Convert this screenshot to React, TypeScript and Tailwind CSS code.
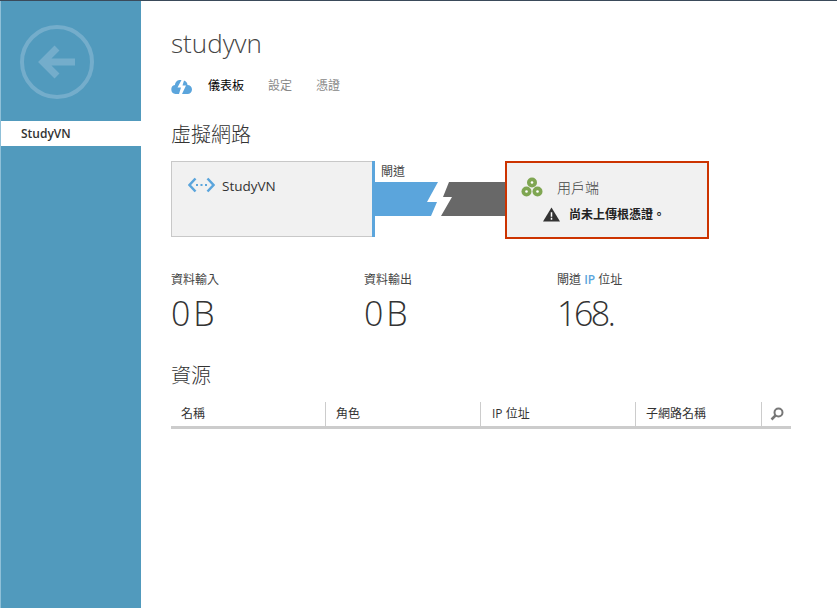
import React from 'react';

const font = "font-['Open_Sans','Noto_Sans_CJK_TC',sans-serif]";

const Stat = ({ label, value, className }: { label: React.ReactNode; value: string; className: string }) => (
  <div className={className}>
    <div className="text-[12px] leading-[16px] text-[#444]">{label}</div>
    <div className="mt-[3px] text-[34px] leading-[44px] font-light tracking-[-2.500px] [word-spacing:-1px] text-[#333]">{value}</div>
  </div>
);

const HeaderCell = ({ children, className }: { children: React.ReactNode; className: string }) => (
  <div className={`h-[24px] border-r border-[#ccc] text-[12px] leading-[23px] text-[#333] ${className}`}>{children}</div>
);

export default function App() {
  return (
    <div className={`flex h-[608px] w-[837px] flex-col overflow-hidden bg-white ${font}`}>
      <div className="h-px bg-[#3a4a5a]" />
      <div className="flex min-h-0 flex-1">
        {/* Sidebar */}
        <aside className="w-[141px] shrink-0 border-l border-[#8fc0d8] bg-[#519ABD]">
          <div className="flex h-[120px] items-start pt-[24px] pl-[19px]">
            <svg width="74" height="74" viewBox="0 0 74 74" fill="none">
              <circle cx="37" cy="37" r="35" stroke="#74ADCB" strokeWidth="4" />
              <path d="M55 37H24M37 23 L23 37 L37 51" stroke="#74ADCB" strokeWidth="7" />
            </svg>
          </div>
          <div className="h-[25px] bg-white pl-[20px] text-[12px] leading-[25px] font-semibold text-[#333]">StudyVN</div>
        </aside>

        {/* Main */}
        <main className="flex-1 pl-[30px]">
          <h1 className="mt-[24px] text-[26px] leading-[36px] font-light text-[#444]">studyvn</h1>

          <nav className="mt-[15px] flex h-[20px] items-center text-[12px] text-[#888]">
            <svg width="21" height="15" viewBox="0 0 21 15" className="mr-[16px]">
              <path d="M4.500 15a4.500 4.500 0 0 1-.6-8.900A5.500 5.500 0 0 1 8.500 1h2L6.500 8.500H10L8 15ZM11 15l4-8.500h-3.500L13 1.500A5 5 0 0 1 16.500 6a4.500 4.500 0 0 1 0 9Z" fill="#5BA5DC" />
            </svg>
            <span className="text-black">儀表板</span>
            <span className="ml-[24px]">設定</span>
            <span className="ml-[24px]">憑證</span>
          </nav>

          <h2 className="mt-[25px] text-[20px] leading-[28px] font-light text-[#333]">虛擬網路</h2>

          {/* Diagram */}
          <div className="mt-[12px] flex h-[78px] items-start">
            <div className="flex h-[76px] w-[201px] items-start border border-r-0 border-[#c8c8c8] bg-[#f1f1f1] pt-[14px] pl-[16px]">
              <svg width="27" height="16" viewBox="0 0 27 16" fill="none" className="mt-px">
                <path d="M7.500 1.500 1.500 8l6 6.500M19.500 1.500l6 6.500-6 6.500" stroke="#5BA5DC" strokeWidth="2.500" />
                <rect x="8" y="7" width="2" height="2" fill="#5BA5DC" />
                <rect x="12.500" y="7" width="2" height="2" fill="#5BA5DC" />
                <rect x="17" y="7" width="2" height="2" fill="#5BA5DC" />
              </svg>
              <span className="ml-[7px] text-[13.500px] leading-[20px] text-[#333]">StudyVN</span>
            </div>
            <div className="h-[76px] w-[3px] bg-[#5BA5DC]" />
            <div className="w-[130px] shrink-0">
              <div className="h-[21px] pl-[6px] text-[12px] leading-[22px] text-[#444]">閘道</div>
              <svg width="130" height="34" viewBox="0 0 130 34" className="block">
                <rect width="65" height="34" fill="#5BA5DC" />
                <rect x="65" width="65" height="34" fill="#686868" />
                <path d="M63 0H74L68 15H77L66 34H56L62 20H52Z" fill="#fff" />
              </svg>
            </div>
            <div className="h-[78px] w-[204px] border-2 border-[#CC3300] bg-[#f1f1f1] pt-[13px] pl-[14px]">
              <div className="flex h-[22px] items-center">
                <svg width="22" height="20" viewBox="0 0 22 20">
                  <circle cx="11" cy="5.500" r="5" fill="#7FA652" />
                  <circle cx="5.500" cy="14.500" r="5" fill="#7FA652" />
                  <circle cx="16.500" cy="14.500" r="5" fill="#7FA652" />
                  <circle cx="11" cy="5.500" r="1.300" fill="#fff" />
                  <circle cx="5.500" cy="14.500" r="1.300" fill="#fff" />
                  <circle cx="16.500" cy="14.500" r="1.300" fill="#fff" />
                </svg>
                <span className="ml-[14px] text-[14px] font-light text-[#444]">用戶端</span>
              </div>
              <div className="mt-[9px] ml-[22px] flex items-center">
                <svg width="17" height="15" viewBox="0 0 18 15">
                  <path d="M9 0 18 15H0Z" fill="#333" />
                  <path d="M8.200 5h1.600v5H8.200ZM8.200 11h1.600v2H8.200Z" fill="#fff" />
                </svg>
                <span className="ml-[9px] text-[12px] leading-[15px] font-bold text-[#222]">尚未上傳根憑證。</span>
              </div>
            </div>
          </div>

          {/* Stats */}
          <div className="mt-[33px] flex">
            <Stat label="資料輸入" value="0 B" className="w-[193px]" />
            <Stat label="資料輸出" value="0 B" className="w-[193px]" />
            <Stat
              label={<>閘道 <span className="font-semibold text-[#5BA5DC]">IP</span> 位址</>}
              value="168."
              className="w-[200px]"
            />
          </div>

          <h2 className="mt-[27px] text-[20px] leading-[28px] font-light text-[#333]">資源</h2>

          {/* Resource table header */}
          <div className="mt-[12px] w-[620px] border-b-[3px] border-[#cccccc]">
            <div className="flex">
              <HeaderCell className="w-[155px] pl-[10px]">名稱</HeaderCell>
              <HeaderCell className="w-[155px] pl-[10px]">角色</HeaderCell>
              <HeaderCell className="w-[155px] pl-[11px]">IP 位址</HeaderCell>
              <HeaderCell className="w-[126px] pl-[10px]">子網路名稱</HeaderCell>
              <div className="flex flex-1 items-center pl-[8px]">
                <svg width="14" height="14" viewBox="0 0 14 14" fill="none">
                  <circle cx="8.500" cy="5.500" r="4" stroke="#777" strokeWidth="2" />
                  <path d="M5.500 8.500 1.500 12.500" stroke="#777" strokeWidth="2.500" />
                </svg>
              </div>
            </div>
          </div>
        </main>
      </div>
    </div>
  );
}
